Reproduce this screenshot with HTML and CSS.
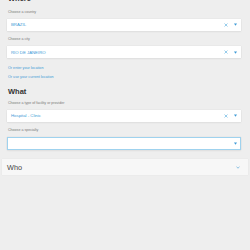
FILE: index.html
```html
<!DOCTYPE html>
<html>
<head>
<meta charset="utf-8">
<link rel="stylesheet" href="styles.css">
</head>
<body>
<div class="page">
  <h2 class="heading where">Where</h2>
  <div class="field first">
    <div class="label">Choose a country</div>
    <div class="select">
      <span class="value upper">BRAZIL</span>
      <span class="icons">
        <svg class="clear" width="4" height="4" viewBox="0 0 4 4"><path d="M0.5 0.5L3.5 3.5M3.5 0.5L0.5 3.5" stroke="#7fc0e6" stroke-width="0.8"/></svg>
        <svg class="arrow" width="3" height="3" viewBox="0 0 3 3"><path d="M0 0.5H3L1.5 2.8Z" fill="#3d9ad6"/></svg>
      </span>
    </div>
  </div>
  <div class="field">
    <div class="label">Choose a city</div>
    <div class="select">
      <span class="value upper">RIO DE JANEIRO</span>
      <span class="icons">
        <svg class="clear" width="4" height="4" viewBox="0 0 4 4"><path d="M0.5 0.5L3.5 3.5M3.5 0.5L0.5 3.5" stroke="#7fc0e6" stroke-width="0.8"/></svg>
        <svg class="arrow" width="3" height="3" viewBox="0 0 3 3"><path d="M0 0.5H3L1.5 2.8Z" fill="#3d9ad6"/></svg>
      </span>
    </div>
  </div>
  <div class="links">
    <a class="link">Or enter your location</a>
    <a class="link">Or use your current location</a>
  </div>
  <h2 class="heading what">What</h2>
  <div class="field tight">
    <div class="label">Choose a type of facility or provider</div>
    <div class="select">
      <span class="value">Hospital - Clinic</span>
      <span class="icons">
        <svg class="clear" width="4" height="4" viewBox="0 0 4 4"><path d="M0.5 0.5L3.5 3.5M3.5 0.5L0.5 3.5" stroke="#7fc0e6" stroke-width="0.8"/></svg>
        <svg class="arrow" width="3" height="3" viewBox="0 0 3 3"><path d="M0 0.5H3L1.5 2.8Z" fill="#3d9ad6"/></svg>
      </span>
    </div>
  </div>
  <div class="field">
    <div class="label">Choose a specialty</div>
    <div class="select focused">
      <span class="value"></span>
      <span class="icons">
        <svg class="arrow" width="3" height="3" viewBox="0 0 3 3"><path d="M0 0.5H3L1.5 2.8Z" fill="#3d9ad6"/></svg>
      </span>
    </div>
  </div>
  <div class="card">
    <span class="card-title">Who</span>
    <svg class="chev" width="4" height="3" viewBox="0 0 4 3"><path d="M0.5 0.8L2 2.2L3.5 0.8" stroke="#6aaedb" stroke-width="0.8" fill="none"/></svg>
  </div>
</div>
</body>
</html>
```
FILE: styles.css
```css
html, body {
  margin: 0;
  padding: 0;
  background: #eeeeee;
  font-family: "Liberation Sans", Arial, sans-serif;
  width: 250px;
  height: 250px;
  overflow: hidden;
}

.page {
  padding: 0 9px 0 7px;
}

.heading {
  margin: 0;
  font-size: 7.5px;
  line-height: 9px;
  font-weight: bold;
  color: #333333;
  padding-left: 1px;
}

.heading.where {
  margin-top: -6px;
}

.heading.what {
  margin-top: 5px;
}

.field {
  margin-top: 6.5px;
}

.field.tight {
  margin-top: 5px;
}

.label {
  font-size: 3.6px;
  line-height: 5px;
  color: #777777;
  padding-left: 1px;
  margin-bottom: 4px;
}

.select {
  height: 12px;
  background: #ffffff;
  box-shadow: 0 0 1px rgba(0, 0, 0, 0.12), 0 1px 2px rgba(0, 0, 0, 0.05);
  display: flex;
  align-items: center;
  justify-content: space-between;
  padding: 0 4px 0 4px;
  box-sizing: border-box;
}

.select.focused {
  height: 13px;
  border: 1px solid #9fd2ee;
  padding-left: 3px;
  padding-right: 3px;
}

.value {
  font-size: 4.3px;
  color: #3d9ad6;
}

.value.upper {
  text-transform: uppercase;
}

.icons {
  display: flex;
  align-items: center;
  gap: 6px;
}

.icons svg {
  display: block;
}

.links {
  margin-top: 5.5px;
  display: flex;
  flex-direction: column;
}

.link {
  font-size: 3.7px;
  line-height: 9px;
  color: #3d9ad6;
  padding-left: 1px;
}

.card {
  margin: 9px -7px 0 -5px;
  height: 16px;
  background: #f7f7f7;
  box-shadow: 0 0 1px rgba(0, 0, 0, 0.08);
  display: flex;
  align-items: center;
  justify-content: space-between;
  padding: 0 8px 0 5px;
}

.card-title {
  font-size: 7.3px;
  color: #444444;
}

.chev {
  display: block;
}
```
